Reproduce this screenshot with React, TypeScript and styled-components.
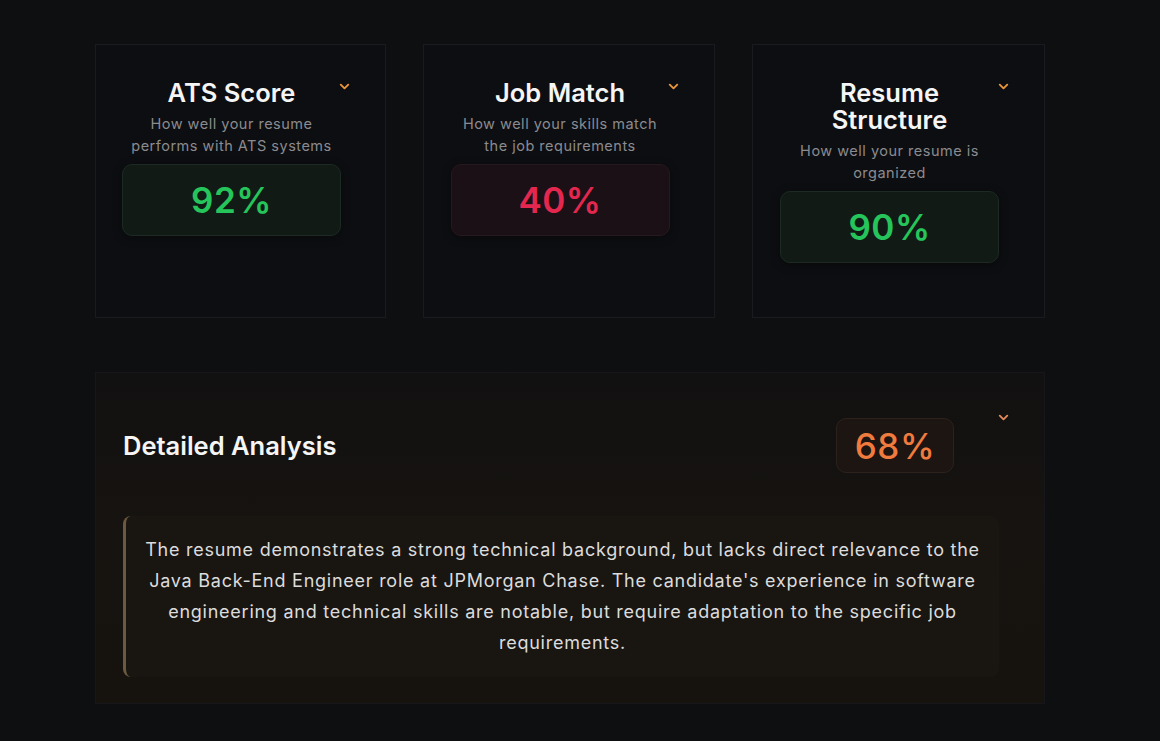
import React from "react";
import styled, { createGlobalStyle } from "styled-components";

const Global = createGlobalStyle`
  html, body { margin: 0; padding: 0; background: #0e0f11; }
  body { font-family: Inter, "Noto Sans", Arial, sans-serif; color: #fff; -webkit-font-smoothing: antialiased; }
`;

const Page = styled.div`
  width: 1160px;
  height: 741px;
  overflow: hidden;
  padding: 44px 0 0 95px;
  box-sizing: border-box;
  background: #0e0f11;
`;

const Column = styled.div`
  width: 950px;
  display: flex;
  flex-direction: column;
  gap: 54px;
`;

const CardRow = styled.div`
  display: grid;
  grid-template-columns: 291px 292px 293px;
  column-gap: 37px;
`;

const Card = styled.div`
  position: relative;
  height: 274px;
  box-sizing: border-box;
  padding: 34px 45px 0 27px;
  background: #0d0e11;
  border: 1px solid #1a1b1f;
  display: flex;
  flex-direction: column;
  align-items: center;
  text-align: center;
`;

const Chevron = styled.svg<{ $top: number; $right: number; $color?: string }>`
  position: absolute;
  top: ${(p) => p.$top}px;
  right: ${(p) => p.$right}px;
  width: 15px;
  height: 15px;
  color: ${(p) => p.$color || "#e8953a"};
`;

const CardTitle = styled.h3`
  margin: 0;
  padding: 0 4px;
  font-size: 25.5px;
  font-weight: 600;
  line-height: 27px;
  color: #f5f5f5;
`;

const CardSub = styled.p`
  margin: 7px 0 7px;
  padding: 0 4px;
  font-size: 14.5px;
  line-height: 22px;
  letter-spacing: 0.5px;
  color: #8b8b8f;
`;

const ScoreBox = styled.div<{ $tone: "green" | "red" }>`
  width: 219px;
  height: 72px;
  box-sizing: border-box;
  border-radius: 10px;
  display: flex;
  align-items: center;
  justify-content: center;
  background: ${(p) => (p.$tone === "green" ? "#111a15" : "#1a1015")};
  border: 1px solid ${(p) => (p.$tone === "green" ? "#1d2a23" : "#271820")};
  box-shadow: 0 2px 10px rgba(0, 0, 0, 0.35);
  font-size: 35px;
  font-weight: 600;
  letter-spacing: 0.5px;
  color: ${(p) => (p.$tone === "green" ? "#25c55c" : "#e3274f")};
`;

const Panel = styled.div`
  position: relative;
  box-sizing: border-box;
  height: 332px;
  padding: 45px 45px 26px 27px;
  background: linear-gradient(180deg, #121111 0%, #161310 45%, #16130f 100%);
  border: 1px solid #17161a;
`;

const PanelHeader = styled.div`
  display: flex;
  align-items: center;
  justify-content: space-between;
  padding-right: 45px;
`;

const PanelTitle = styled.h2`
  margin: 0;
  font-size: 25.5px;
  font-weight: 600;
  color: #f5f5f5;
`;

const OverallBox = styled.div`
  width: 118px;
  height: 55px;
  box-sizing: border-box;
  border-radius: 10px;
  background: #1c1511;
  border: 1px solid #2c221c;
  display: flex;
  align-items: center;
  justify-content: center;
  font-size: 35px;
  font-weight: 500;
  letter-spacing: 0.5px;
  color: #f07b3e;
`;

const Quote = styled.blockquote`
  margin: 43px 0 0;
  box-sizing: border-box;
  height: 161px;
  padding: 18px 16px 20px;
  border-left: 3px solid #6b5940;
  border-radius: 8px;
  background: #191612;
  display: flex;
  align-items: center;
  justify-content: center;
  text-align: center;
  font-size: 18px;
  line-height: 31px;
  color: #dcdcdc;
  letter-spacing: 0.75px;
`;

const ChevronIcon = ({ top, right, color }: { top: number; right: number; color?: string }) => (
  <Chevron $top={top} $right={right} $color={color} viewBox="0 0 24 24" fill="none" stroke="currentColor" strokeWidth={3} strokeLinecap="round" strokeLinejoin="round">
    <path d="M6 9l6 6 6-6" />
  </Chevron>
);

const cards = [
  { title: "ATS Score", sub: "How well your resume performs with ATS systems", score: "92%", tone: "green" as const },
  { title: "Job Match", sub: "How well your skills match the job requirements", score: "40%", tone: "red" as const },
  { title: "Resume Structure", sub: "How well your resume is organized", score: "90%", tone: "green" as const },
];

export default function App() {
  return (
    <>
      <Global />
      <Page>
        <Column>
          <CardRow>
            {cards.map((c) => (
              <Card key={c.title}>
                <ChevronIcon top={34} right={33} />
                <CardTitle>{c.title}</CardTitle>
                <CardSub>{c.sub}</CardSub>
                <ScoreBox $tone={c.tone}>{c.score}</ScoreBox>
              </Card>
            ))}
          </CardRow>
          <Panel>
            <ChevronIcon top={37} right={33} color="#e08a5a" />
            <PanelHeader>
              <PanelTitle>Detailed Analysis</PanelTitle>
              <OverallBox>68%</OverallBox>
            </PanelHeader>
            <Quote>
              The resume demonstrates a strong technical background, but lacks direct relevance to the Java Back-End
              Engineer role at JPMorgan Chase. The candidate's experience in software engineering and technical skills
              are notable, but require adaptation to the specific job requirements.
            </Quote>
          </Panel>
        </Column>
      </Page>
    </>
  );
}
